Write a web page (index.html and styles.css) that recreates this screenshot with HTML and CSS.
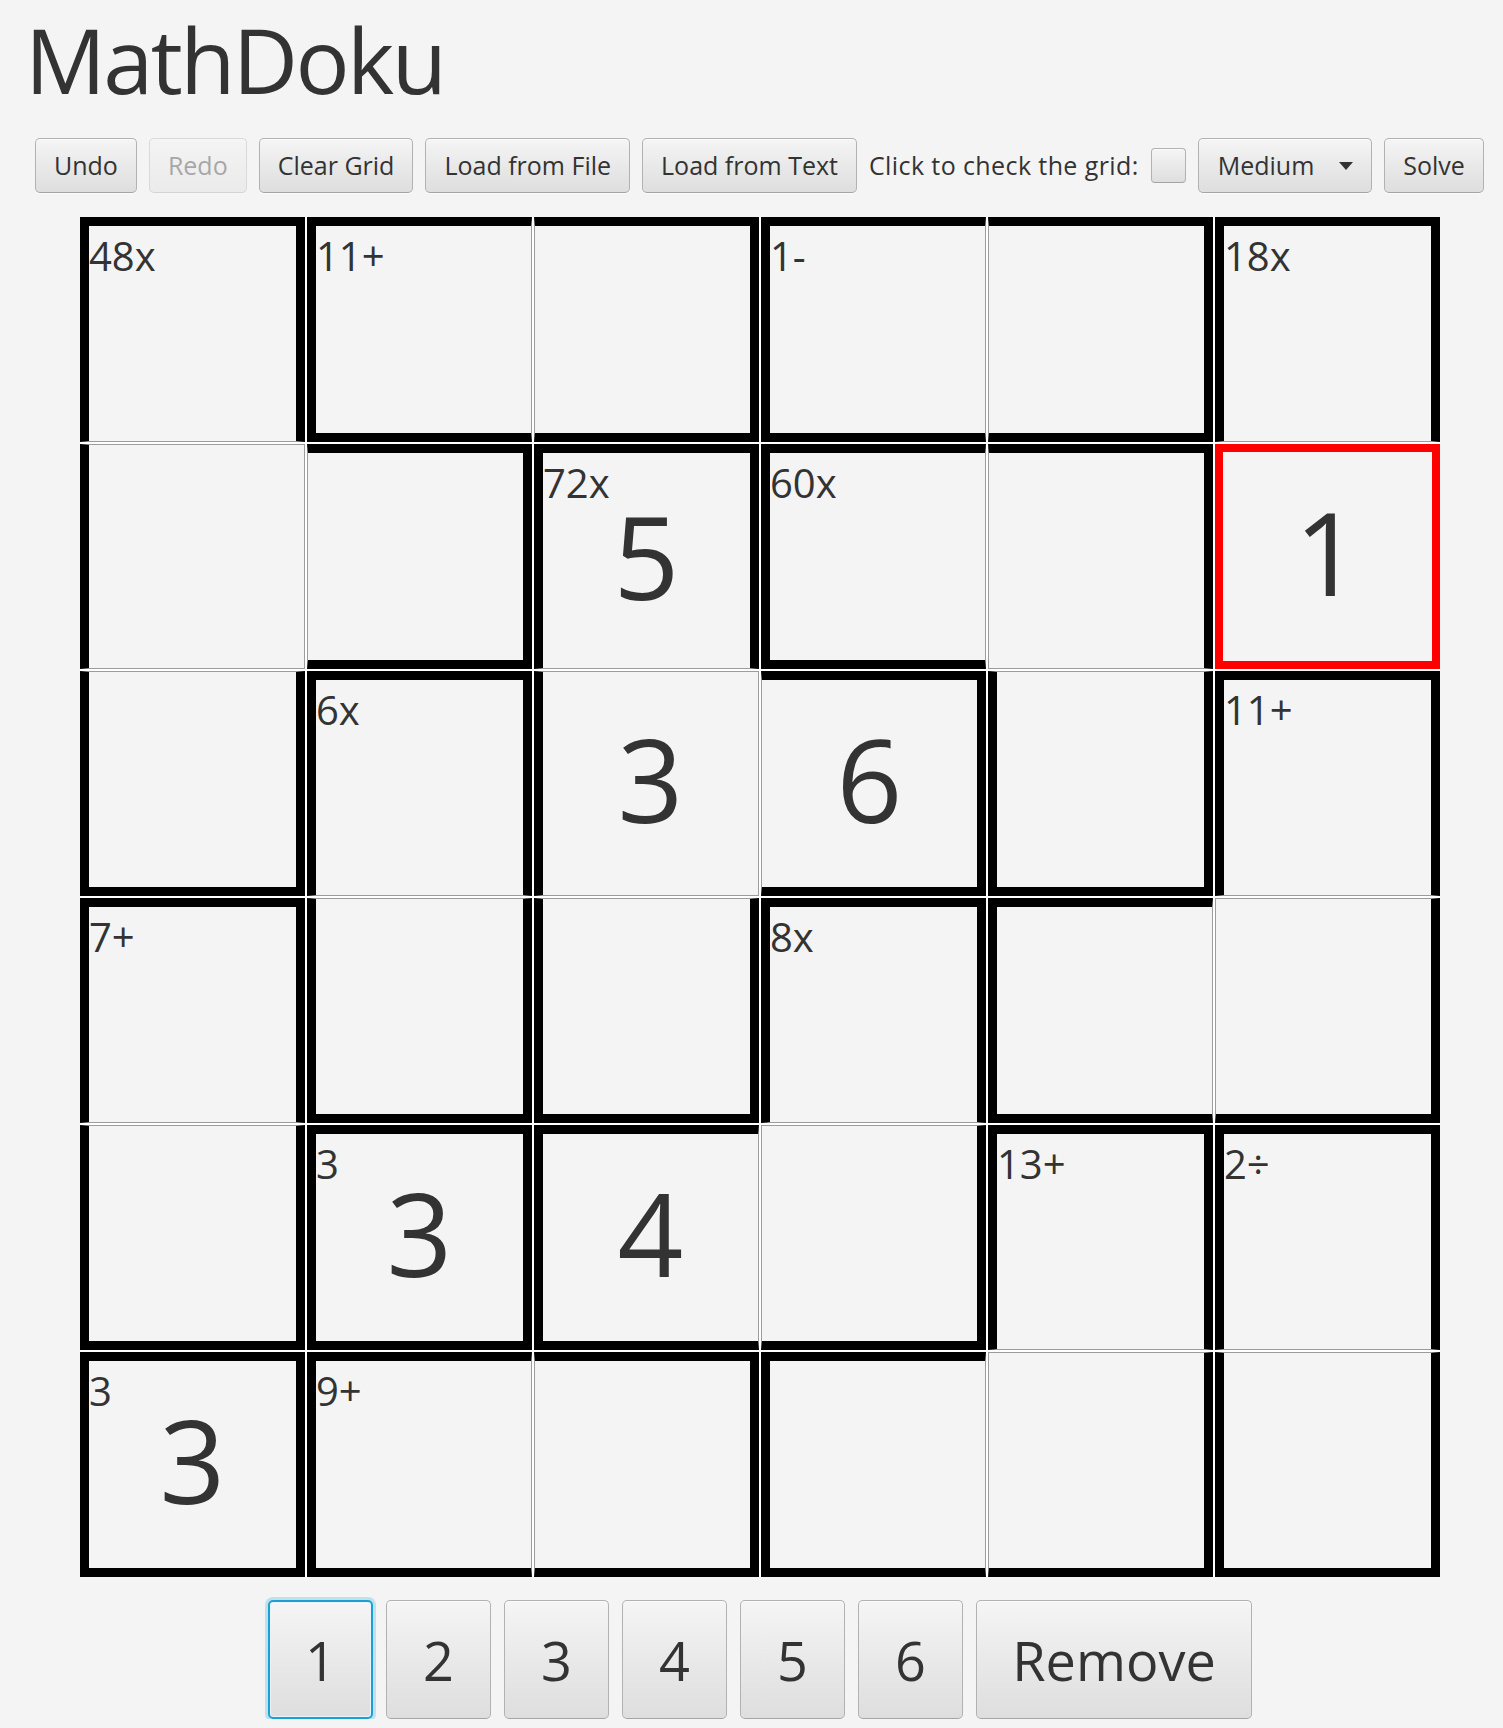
FILE: index.html
```html
<!DOCTYPE html>
<html lang="en">
<head>
<meta charset="utf-8">
<title>MathDoku</title>
<link rel="stylesheet" href="styles.css">
</head>
<body>
<div class="app">
  <h1 class="title">MathDoku</h1>

  <div class="toolbar">
    <button class="btn">Undo</button>
    <button class="btn" disabled>Redo</button>
    <button class="btn">Clear Grid</button>
    <button class="btn">Load from File</button>
    <button class="btn">Load from Text</button>
    <span class="check-label">Click to check the grid:</span>
    <span class="checkbox"></span>
    <button class="btn combo"><span>Medium</span><svg class="arrow" width="14" height="8" viewBox="0 0 14 8"><path d="M0 0H14L7 8Z" fill="#333"/></svg></button>
    <button class="btn">Solve</button>
  </div>

  <div class="grid">
    <div class="cell t r l"><span class="cage">48x</span></div>
    <div class="cell t b l"><span class="cage">11+</span></div>
    <div class="cell t r b"></div>
    <div class="cell t b l"><span class="cage">1-</span></div>
    <div class="cell t r b"></div>
    <div class="cell t r l"><span class="cage">18x</span></div>

    <div class="cell l"></div>
    <div class="cell t r b"></div>
    <div class="cell t r l"><span class="cage">72x</span><span class="val">5</span></div>
    <div class="cell t b l"><span class="cage">60x</span></div>
    <div class="cell t r"></div>
    <div class="cell sel"><span class="val">1</span></div>

    <div class="cell r b l"></div>
    <div class="cell t r l"><span class="cage">6x</span></div>
    <div class="cell l"><span class="val">3</span></div>
    <div class="cell t r b"><span class="val">6</span></div>
    <div class="cell r b l"></div>
    <div class="cell t r l"><span class="cage">11+</span></div>

    <div class="cell t r l"><span class="cage">7+</span></div>
    <div class="cell r b l"></div>
    <div class="cell r b l"></div>
    <div class="cell t r l"><span class="cage">8x</span></div>
    <div class="cell t b l"></div>
    <div class="cell r b"></div>

    <div class="cell r b l"></div>
    <div class="cell t r b l"><span class="cage">3</span><span class="val">3</span></div>
    <div class="cell t b l"><span class="val">4</span></div>
    <div class="cell r b"></div>
    <div class="cell t r l"><span class="cage">13+</span></div>
    <div class="cell t r l"><span class="cage">2÷</span></div>

    <div class="cell t r b l"><span class="cage">3</span><span class="val">3</span></div>
    <div class="cell t b l"><span class="cage">9+</span></div>
    <div class="cell t r b"></div>
    <div class="cell t b l"></div>
    <div class="cell r b"></div>
    <div class="cell r b l"></div>
  </div>

  <div class="numbers">
    <button class="btn big num focused">1</button>
    <button class="btn big num">2</button>
    <button class="btn big num">3</button>
    <button class="btn big num">4</button>
    <button class="btn big num">5</button>
    <button class="btn big num">6</button>
    <button class="btn big remove">Remove</button>
  </div>
</div>
</body>
</html>
```

FILE: styles.css
```css
html, body {
  margin: 0;
  padding: 0;
  background: #f4f4f4;
}

body {
  font-family: "Open Sans", "Noto Sans", sans-serif;
  color: #333333;
}

.app {
  display: flex;
  flex-direction: column;
}

.title {
  margin: 0;
  padding: 14px 0 0 25px;
  font-size: 90px;
  line-height: 90px;
  font-weight: 400;
  letter-spacing: -2.6px;
  color: #333333;
}

.toolbar {
  display: flex;
  align-items: center;
  gap: 12px;
  margin-top: 34px;
  padding-left: 35px;
  height: 55px;
}

.btn {
  font-family: "Open Sans", "Noto Sans", sans-serif;
  font-size: 25px;
  line-height: 33px;
  color: #333333;
  height: 55px;
  padding: 10px 18px;
  border: 1px solid #b2b2b2;
  border-bottom-color: #a4a4a4;
  border-radius: 5px;
  background: linear-gradient(to bottom, #f5f5f5 0%, #e9e9e9 50%, #dedede 100%);
  box-shadow: inset 0 1px 0 #fbfbfb, 0 1px 0 rgba(255, 255, 255, 0.6);
  box-sizing: border-box;
  cursor: default;
}

.btn:disabled {
  opacity: 0.4;
}

.check-label {
  font-size: 25px;
  line-height: 33px;
  letter-spacing: 0.4px;
  color: #333333;
}

.checkbox {
  width: 35px;
  height: 35px;
  box-sizing: border-box;
  border: 1px solid #b2b2b2;
  border-bottom-color: #a4a4a4;
  border-radius: 4px;
  background: linear-gradient(to bottom, #f5f5f5, #dedede);
  box-shadow: inset 0 1px 0 #fbfbfb;
}

.combo {
  display: flex;
  align-items: center;
  gap: 25px;
  padding-left: 19px;
  padding-right: 18px;
}

.arrow {
  display: block;
}

.grid {
  display: grid;
  grid-template-columns: repeat(6, 225px);
  grid-template-rows: repeat(6, 225px);
  gap: 2px;
  width: 1360px;
  margin: 24px 0 0 80px;
  background: #ffffff;
}

.cell {
  box-sizing: border-box;
  display: grid;
  background: #f4f4f4;
  border: 1px solid #9c9c9c;
  overflow: hidden;
}

.cell.t { border-top: 9px solid #000000; }
.cell.r { border-right: 9px solid #000000; }
.cell.b { border-bottom: 9px solid #000000; }
.cell.l { border-left: 9px solid #000000; }

.cell.sel {
  border: 8px solid #ff0000;
}

.cage,
.val {
  grid-area: 1 / 1;
}

.cage {
  justify-self: start;
  align-self: start;
  padding-top: 3px;
  font-size: 40px;
  line-height: 1.362;
  color: #333333;
}

.val {
  place-self: center;
  font-size: 115px;
  line-height: 1;
  margin-bottom: 10px;
  color: #333333;
}

.numbers {
  display: flex;
  justify-content: center;
  gap: 13px;
  width: 1360px;
  margin: 23px 0 0 80px;
}

.btn.big {
  height: 119px;
  font-size: 54px;
  line-height: 76px;
  padding: 20px 0;
  display: flex;
  align-items: center;
  justify-content: center;
}

.btn.num {
  width: 105px;
}

.btn.remove {
  width: 276px;
}

.btn.focused {
  border: 2px solid #1b9fd4;
  box-shadow: 0 0 0 3px rgba(3, 158, 211, 0.22), inset 0 0 0 1px #e8f4fa;
}
```
